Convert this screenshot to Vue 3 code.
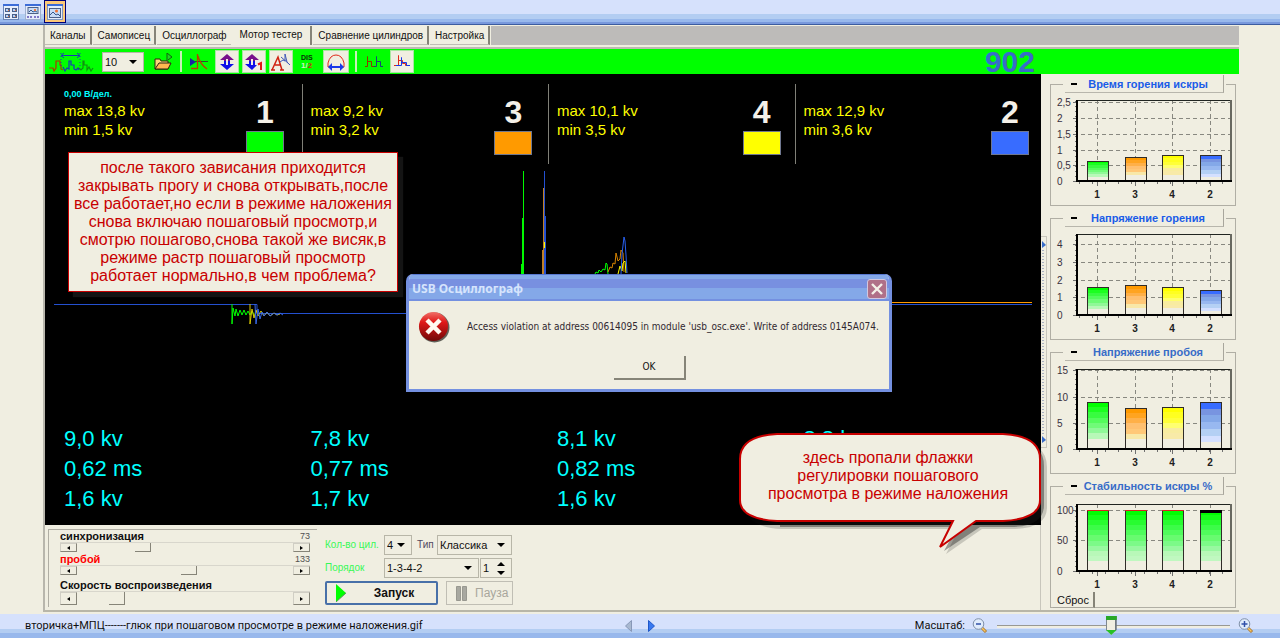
<script setup>
import { ref } from 'vue'

const tabs = ['Каналы', 'Самописец', 'Осциллограф', 'Мотор тестер', 'Сравнение цилиндров', 'Настройка']
const activeTab = ref(3)

const channels = [
  { id: 1, color: '#00ff00', max: '13,8', min: '1,5', read: ['9,0 kv', '0,62 ms', '1,6 kv'] },
  { id: 3, color: '#ff9a00', max: '9,2', min: '3,2', read: ['7,8 kv', '0,77 ms', '1,7 kv'] },
  { id: 4, color: '#ffff00', max: '10,1', min: '3,5', read: ['8,1 kv', '0,82 ms', '1,6 kv'] },
  { id: 2, color: '#386cff', max: '12,9', min: '3,6', read: ['8,8 kv'] }
]

const bands = {
  green: ['#00ff00', '#1cff20', '#38fc40', '#54fc5c', '#70fb78', '#90f898', '#b8f8b8', '#f0eee1', '#f0eee1'],
  orange: ['#ff9a00', '#ffa420', '#ffb048', '#ffc070', '#ffc878', '#f8e8a8', '#f0eee1', '#f0eee1'],
  yellow: ['#ffff00', '#ffff20', '#ffff38', '#ffff70', '#f8eca0', '#f8eaa8', '#f0eee1', '#f0eee1'],
  blue: ['#386cff', '#7894e0', '#84a8e8', '#98b8f0', '#b4d0f4', '#d4e0ff', '#f0eee1'],
  stable: ['#00ff00', '#14ff18', '#28fc30', '#3cfc48', '#50fc5c', '#68fb70', '#7cfa88', '#98f8a0', '#b8f8b8', '#c0f8c0', '#f0eee1', '#f0eee1']
}

const order = ['green', 'orange', 'yellow', 'blue']
const order4 = ['stable', 'stable', 'stable', 'stable']

const charts = [
  { title: 'Время горения искры', tone: '#1a5ce8', top: 7, base: 88, ticks: [['2,5', 9], ['2', 25], ['1,5', 41], ['1', 57], ['0,5', 72], ['0', 88]], bars: [68, 64, 62, 62], kinds: order },
  { title: 'Напряжение горения', tone: '#1a5ce8', top: 7, base: 88, ticks: [['4', 17], ['3', 35], ['2', 53], ['1', 70], ['0', 88]], bars: [60, 58, 60, 63], kinds: order },
  { title: 'Напряжение пробоя', tone: '#386cc8', top: 8, base: 88, ticks: [['15', 9], ['10', 36], ['5', 62], ['0', 88]], bars: [41, 47, 46, 41], kinds: order },
  { title: 'Стабильность искры %', tone: '#386cc8', top: 9, base: 76, ticks: [['100', 15], ['50', 45], ['0', 76]], bars: [15, 15, 15, 15], kinds: order4, cap: ['#d82020', '#d82020', '#d82020', '#000000'], reset: true }
]
const centers = [45, 83, 120, 158]

function slices(chart, i) {
  const list = bands[chart.kinds[i]]
  const h = (chart.base - chart.bars[i]) / list.length
  return list.map((fill, k) => ({ fill, y: chart.bars[i] + k * h, h: h + 0.2 }))
}

const sliders = [
  { id: 'sync', label: 'синхронизация', value: 29, shown: '73' },
  { id: 'brk', label: 'пробой', value: 52, shown: '133', red: true },
  { id: 'speed', label: 'Скорость воспроизведения', value: 16, shown: '' }
]
const scale = ref(49)
</script>

<template>
  <div class="viewer">
    <header class="topbar">
      <button class="view" aria-label="Эскизы">
        <svg width="16" height="16" viewBox="0 0 16 16"><rect x=".5" y=".5" width="15" height="15" fill="#e8eefc" stroke="#6c86b8" /><path d="M0 1h16" stroke="#3c6cd8" stroke-width="2" /><path d="M2 4h5v4H2zM9 4h5v4H9zM2 10h5v4H2zM9 10h5v4H9z" fill="#4c6088" /><path d="M3 5h2v2H3zM10 5h2v2h-2zM3 11h2v2H3zM10 11h2v2h-2z" fill="#b8d0f8" /><path d="M5 6h1v1H5zM12 6h1v1h-1zM5 12h1v1H5zM12 12h1v1h-1z" fill="#f08040" /></svg>
      </button>
      <button class="view" aria-label="Лента">
        <svg width="16" height="16" viewBox="0 0 16 16"><rect x=".5" y=".5" width="15" height="15" fill="#e4ecfc" stroke="#a0b0d0" /><path d="M0 1h16" stroke="#3c6cd8" stroke-width="2" /><rect x="3" y="3.500" width="10" height="6" fill="#c8dcf8" stroke="#4c6088" /><path d="M4 8l2-2 2 2 2-1 2 1" stroke="#38588c" fill="none" /><path d="M9 5h2v2H9z" fill="#f08040" /><path d="M2 12h2v2H2zM5 12h2v2H5zM9 12h2v2H9zM12 12h2v2h-2z" fill="#8078c8" /></svg>
      </button>
      <button class="view on" aria-label="Один рисунок">
        <svg width="16" height="16" viewBox="0 0 16 16"><rect x=".5" y=".5" width="15" height="15" fill="#e4ecfc" stroke="#8098c0" /><path d="M0 1h16" stroke="#3c6cd8" stroke-width="2" /><rect x="2.500" y="4.500" width="11" height="9" fill="#c8dcf8" stroke="#4c6088" /><path d="M3 11l3-3 3 3 2-1 2 2" stroke="#38588c" fill="none" /><circle cx="9.500" cy="7" r="1.500" fill="#f07030" /></svg>
      </button>
    </header>

    <main class="app">
      <nav class="tabs">
        <button v-for="(t, i) in tabs" :key="t" class="tab" :class="{ active: i === activeTab, before: i === activeTab - 1 }" @click="activeTab = i">{{ t }}</button>
        <span class="tabfill"></span>
      </nav>

      <div class="toolbar">
        <svg class="wave" width="46" height="20" viewBox="0 0 46 20" fill="none"><path d="M0 16h4l1 3 2-3V9h4v4h1v4l2 1" stroke="#b83000" stroke-width="1.200" /><path d="M14 15l2 4 2-3 2 1V9h2v4h3v4l2 1 2-2 1 2" stroke="#1838b8" stroke-width="1.200" /><path d="M30 16l2 2 2-2V9h1v4h3v5l2-3 2 4 2-3" stroke="#109010" stroke-width="1.200" /><path d="M13 3.500h17M15 1l-3 2.500 3 2.500M28 1l3 2.500-3 2.500" stroke="#1838b8" /><path d="M12 1v13M31 1v13" stroke="#1838b8" stroke-dasharray="1 2" /></svg>
        <label class="drop scalebox"><select aria-label="Развертка"><option>10</option></select><svg width="8" height="4" viewBox="0 0 8 4"><path d="M0 0h8L4 4z" /></svg></label>
        <svg class="open" width="20" height="18" viewBox="0 0 20 18"><path d="M1 16V6h5l1 2h7v8z" fill="#f8d878" stroke="#302010" /><path d="M1 16l4-6h12l-3 6z" fill="#ffb850" stroke="#302010" /><path d="M13 8V0l5 4-4 3" fill="#20d820" stroke="#106010" /></svg>
        <i class="sep"></i>
        <svg class="trig" width="18" height="18" viewBox="0 0 18 18" fill="none"><path d="M0 5l6 4-6 4z" fill="#1828a0" /><path d="M5 8.500h13" stroke="#305030" /><path d="M7.500 1v15M8 3q2 8 9 13M1 15.500h7" stroke="#b84000" stroke-width="1.300" /></svg>
        <button class="tool" aria-label="Масштаб по вертикали"><svg width="16" height="18" viewBox="0 0 16 18"><path d="M8 1l7 6h-4v4H5V7H1z" fill="#78108c" /><path d="M8 17l7-6h-4V8H5v3H1z" fill="#1010e8" /><path d="M7 6h2v6H7z" fill="#f0eee1" /></svg></button>
        <button class="tool" aria-label="Масштаб одного"><svg width="18" height="18" viewBox="0 0 18 18"><path d="M7 1l7 6h-4v4H4V7H0z" fill="#78108c" /><path d="M7 17l5-5h-2V8H4v3H0z" fill="#1010e8" /><path d="M6 6h2v6H6z" fill="#f0eee1" /><path d="M13 11.500l3-1.500v7" stroke="#e01818" stroke-width="2" fill="none" /></svg></button>
        <button class="tool" aria-label="Автоматически"><svg width="20" height="18" viewBox="0 0 20 18" fill="none"><path d="M1 17L7 4l4 13M4 12h5M0 17h4M9 17h4" stroke="#d02010" stroke-width="1.500" /><path d="M9 9l3-2 2 1V1l2 8 3 3M10 4l8 7" stroke="#4058b8" /></svg></button>
        <span class="dis"><b>DIS</b><span><em>1/</em><u>2</u></span></span>
        <button class="tool wide" aria-label="Полный цикл"><svg width="20" height="18" viewBox="0 0 20 18" fill="none"><path d="M4 14H2V10q2-8 8-8t8 8v4h-2" stroke="#e02818" /><path d="M3 14h14" stroke="#1838e8" stroke-width="2" /><path d="M6 10v8l-4-4zM14 10v8l4-4z" fill="#1838e8" /></svg></button>
        <i class="sep"></i>
        <svg class="pulse" width="18" height="14" viewBox="0 0 18 14" fill="none"><path d="M0 11.500h2.500V1.500v5h4v5H9" stroke="#903800" /><path d="M9 11.500h2.500V1.500v5h4v5H18" stroke="#184878" /></svg>
        <button class="tool" aria-label="Наложение"><svg width="16" height="14" viewBox="0 0 16 14" fill="none"><path d="M0 10.500h4.500V.500v5h4v3h3v2H16" stroke="#e02818" /><path d="M2 10.500h5.500V2.500v5h5v3H16" stroke="#1838e8" /></svg></button>
        <output class="counter">902</output>
      </div>

      <div class="work">
        <div class="left">
          <section class="scope">
            <svg class="traces" viewBox="0 0 996 451" preserveAspectRatio="none" fill="none">
              <path d="M9 230.500h203v9h151M847 230.500h140" stroke="#2450d0" />
              <path d="M847 228.500h140" stroke="#ff9a00" />
              <path d="M187 230v20l1-16 2 8 1-7 2 7 2-6 2 5 2-5 2 5 2-4 2 4 2-4 2 4" stroke="#00ff00" />
              <path d="M205 230v20l2-15 2 9 2-8 2 6 3-5 3 5 3-4 3 4 4-3 3 2 3-1" stroke="#d8c800" />
              <path d="M210 230l1 20 2-15 2 10 2-7 2 4 3-4 3 4 4-3 3 2 3-2 3 2" stroke="#3868e8" />
              <path d="M478.500 97v103M477.500 144v56M476.500 190v10" stroke="#00f800" />
              <path d="M498.500 114v86M497.500 176v24" stroke="#c08028" />
              <path d="M499.500 97v103M500.500 142v58" stroke="#2450d0" /><path d="M499.500 168v6" stroke="#ffff00" />
              <path d="M550 200l1-2 2 1 1-3 2 2 2-3 2 1 1-7 1 1 1 10" stroke="#00ff00" />
              <path d="M563 198l2-5 2 1 1-5 2 1 1-11 2 8 2-2 1-9 2 3 1 19" stroke="#d88400" />
              <path d="M573 200l2-8 2 5 1-8 2-2 1 12" stroke="#ffff00" />
              <path d="M576 200l1-20 2-17 1 4 1 14 1 18" stroke="#2860f0" />
            </svg>
            <div class="head">
              <div class="limits">
                <div v-for="(c, i) in channels" :key="c.id" class="limit" :class="{ line: i }">
                  <small>{{ i ? '' : '0,00 В/дел.' }}</small>
                  <p>max {{ c.max }} kv</p>
                  <p>min {{ c.min }} kv</p>
                </div>
              </div>
              <div class="keys">
                <div v-for="c in channels" :key="c.id" class="key">
                  <strong>{{ c.id }}</strong>
                  <svg width="38" height="24"><rect x=".5" y=".5" width="37" height="23" :fill="c.color" stroke="#707890" /></svg>
                </div>
              </div>
            </div>
            <div class="reads">
              <div v-for="c in channels" :key="c.id"><p v-for="(r, k) in c.read" :key="k">{{ r }}</p></div>
            </div>

            <aside class="note">после такого зависания приходится закрывать прогу и снова открывать,после все работает,но если в режиме наложения снова включаю пошаговый просмотр,и смотрю пошагово,снова такой же висяк,в режиме растр пошаговый просмотр работает нормально,в чем проблема?</aside>

            <div class="dialog" role="dialog" aria-labelledby="dlg-title">
              <div class="caption">
                <h2 id="dlg-title">USB Осциллограф</h2>
                <button aria-label="Закрыть"><svg width="12" height="12" viewBox="0 0 12 12"><path d="M1 1l10 10M11 1L1 11" stroke="#f4f0e8" stroke-width="2.400" /></svg></button>
              </div>
              <div class="message">
                <svg width="32" height="32" viewBox="0 0 32 32">
                  <defs><linearGradient id="red" x1="0" y1="0" x2="0" y2="1"><stop offset="0" stop-color="#f07068" /><stop offset=".35" stop-color="#e01818" /><stop offset="1" stop-color="#700808" /></linearGradient></defs>
                  <circle cx="16.500" cy="16.500" r="15" fill="#606058" /><circle cx="15.500" cy="15.500" r="14.500" fill="url(#red)" />
                  <path d="M9 9l13 13M22 9L9 22" stroke="#fff8f0" stroke-width="4.500" />
                </svg>
                <p>Access violation at address 00614095 in module 'usb_osc.exe'. Write of address 0145A074.</p>
              </div>
              <button class="ok">OK</button>
            </div>

            <aside class="bubble">
              <svg width="312" height="126" viewBox="0 0 312 126">
                <path d="M44 8H274Q309 10 309 35V75Q309 97 274 97H244L208 122 221 97H44Q8 95 8 75" fill="#101010" opacity=".18" />
                <path d="M42 7H272Q306 9 306 34V73Q306 95 272 95H242L206 119 219 95H42" fill="#181818" opacity=".4" />
                <path d="M39 2H265Q302 4 302 27V68Q302 87 265 89H238L202 115 215 89H39Q2 87 2 68V27Q2 4 39 2Z" fill="#f0eee1" stroke="#c80000" stroke-width="2" />
              </svg>
              <p>здесь пропали флажки<br>регулировки пошагового<br>просмотра в режиме наложения</p>
            </aside>
          </section>

          <section class="controls">
            <div class="scrolls">
              <div v-for="s in sliders" :key="s.id" class="scroll" :class="s.id">
                <div class="cap"><label :for="s.id" :class="{ red: s.red }">{{ s.label }}</label><span>{{ s.shown }}</span></div>
                <div class="bar">
                  <button aria-label="Меньше"><svg width="3" height="4" viewBox="0 0 3 4"><path d="M3 0v4L0 2z" /></svg></button>
                  <input :id="s.id" v-model="s.value" type="range" min="0" max="100">
                  <button aria-label="Больше"><svg width="3" height="4" viewBox="0 0 3 4"><path d="M0 0v4l3-2z" /></svg></button>
                </div>
              </div>
            </div>
            <div class="setup">
              <div class="row">
                <label class="lime" for="cyl">Кол-во цил.</label>
                <span class="drop cyl"><select id="cyl"><option>4</option></select><svg width="8" height="4" viewBox="0 0 8 4"><path d="M0 0h8L4 4z" /></svg></span>
                <label class="type" for="kind">Тип</label>
                <span class="drop kind"><select id="kind"><option>Классика</option></select><svg width="8" height="4" viewBox="0 0 8 4"><path d="M0 0h8L4 4z" /></svg></span>
              </div>
              <div class="row">
                <label class="lime" for="order">Порядок</label>
                <span class="drop order"><select id="order"><option>1-3-4-2</option></select><svg width="8" height="4" viewBox="0 0 8 4"><path d="M0 0h8L4 4z" /></svg></span>
                <span class="drop spin"><input type="text" value="1" aria-label="Номер"><svg width="8" height="13" viewBox="0 0 8 13"><path d="M0 4h8L4 0zM0 9h8l-4 4z" /></svg></span>
              </div>
              <div class="row">
                <button class="start"><svg width="10" height="18" viewBox="0 0 10 18"><path d="M0 0v18l10-9z" fill="#00ff00" /><path d="M0 18l10-9" stroke="#609060" /></svg><span>Запуск</span></button>
                <button class="pause"><svg width="11" height="15" viewBox="0 0 11 15"><path d="M.5.500h4v14h-4zM6.500.500h4v14h-4z" fill="#a8a8a0" stroke="#989890" /></svg><span>Пауза</span></button>
              </div>
            </div>
          </section>
        </div>

        <div class="splitter"><div><svg width="4" height="7" viewBox="0 0 4 7"><path d="M0 0v7l4-3z" fill="#386cc8" /></svg><i></i><svg width="4" height="7" viewBox="0 0 4 7"><path d="M0 0v7l4-3z" fill="#386cc8" /></svg></div></div>

        <section class="charts">
          <fieldset v-for="c in charts" :key="c.title">
            <legend><button><i></i><span :style="{ color: c.tone }">{{ c.title }}</span></button></legend>
            <svg class="chart" width="183" :height="c.base + 19" :viewBox="`0 0 183 ${c.base + 19}`">
              <g stroke="#888880" stroke-dasharray="4 3" shape-rendering="crispEdges">
                <path v-for="t in c.ticks.slice(0, -1)" :key="t[0]" :d="`M22 ${t[1]}.5H179`" />
                <path v-for="x in centers" :key="x" :d="`M${x}.5 ${c.top}V${c.base}`" />
              </g>
              <g stroke="#707070" shape-rendering="crispEdges">
                <path v-for="n in 12" :key="n" :d="`M${14 + n * 13}.5 ${c.base}v3`" />
                <path v-for="x in centers" :key="x" :d="`M${x}.5 ${c.base}v5`" />
                <path v-for="n in Math.floor((c.base - c.top) / 5)" :key="n + 20" :d="`M23 ${c.base - n * 5}.5h2`" />
                <path v-for="t in c.ticks" :key="t[0]" :d="`M21 ${t[1]}.5h4`" />
              </g>
              <g v-for="(x, i) in centers" :key="x" shape-rendering="crispEdges">
                <rect v-for="(s, k) in slices(c, i)" :key="k" :x="x - 10" :y="s.y" width="21" :height="s.h" :fill="s.fill" />
                <path :d="`M${x - 10}.5 ${c.base}V${c.bars[i]}.5H${x + 11}.5V${c.base}`" fill="none" stroke="#302c28" />
                <rect v-if="c.cap" :x="x - 10" :y="c.bars[i]" width="22" :height="i === 3 ? 3 : 1" :fill="c.cap[i]" />
              </g>
              <g shape-rendering="crispEdges"><path :d="`M25 ${c.top}.5H180`" stroke="#202420" /><path :d="`M179 ${c.top}V${c.base}`" stroke="#686860" stroke-width="2" /><path :d="`M25 ${c.top}V${c.base}H180`" fill="none" stroke="#000" stroke-width="2" /></g>
              <text v-for="t in c.ticks" :key="t[0]" x="5" :y="t[1] + 4" class="tick">{{ t[0] }}</text>
              <text v-for="(x, i) in centers" :key="x" :x="x" :y="c.base + 17" class="num">{{ channels[i].id }}</text>
            </svg>
            <button v-if="c.reset" class="reset">Сброс</button>
          </fieldset>
        </section>
      </div>
    </main>

    <footer class="status">
      <span class="file">вторичка+МПЦ-------глюк при пошаговом просмотре в режиме наложения.gif</span>
      <button class="prev" aria-label="Назад"><svg width="7" height="12" viewBox="0 0 7 12"><path d="M6.500.500v11L.500 6z" fill="#a8b8d0" stroke="#8898b8" /></svg></button>
      <button class="next" aria-label="Вперед"><svg width="7" height="12" viewBox="0 0 7 12"><path d="M.500.500v11L6.500 6z" fill="#3878f0" stroke="#2058c8" /></svg></button>
      <label class="zoomlabel" for="scale">Масштаб:</label>
      <button aria-label="Уменьшить"><svg width="16" height="16" viewBox="0 0 16 16"><path d="M10 10l4 4" stroke="#a87028" stroke-width="3" /><path d="M10 10l3.500 3.500" stroke="#f8c860" stroke-width="1.500" /><circle cx="6.500" cy="6" r="5.300" fill="#e0ecfc" stroke="#8090a8" /><path d="M4 6h5" stroke="#3050a8" stroke-width="1.500" /></svg></button>
      <input id="scale" v-model="scale" type="range" min="0" max="100">
      <button aria-label="Увеличить"><svg width="16" height="16" viewBox="0 0 16 16"><path d="M10 10l4 4" stroke="#a87028" stroke-width="3" /><path d="M10 10l3.500 3.500" stroke="#f8c860" stroke-width="1.500" /><circle cx="6.500" cy="6" r="5.300" fill="#e0ecfc" stroke="#8090a8" /><path d="M3.500 6h6M6.500 3v6" stroke="#3050a8" stroke-width="1.500" /></svg></button>
    </footer>
  </div>
</template>

<style>
body { margin: 0; background: #f0eee1; }
</style>

<style scoped>
* { box-sizing: border-box; }
p, h2 { margin: 0; }
button, input, select { margin: 0; padding: 0; border: 0; background: none; font: inherit; color: inherit; appearance: none; border-radius: 0; }
svg { display: block; flex: none; }
.viewer { display: flex; flex-direction: column; min-height: 100vh; background: #f0eee1; font: 11px/14px "Liberation Sans", sans-serif; color: #101010; }

.topbar { height: 25px; display: flex; align-items: flex-start; background: linear-gradient(#d6e1fc 14px, #b3cdf2 14px 19px, #98b8ec 19px 22px, #7898dc 22px 24px, #3c5ca0 24px); }
.view { width: 22px; height: 23px; display: grid; place-items: center; }
.view.on { border: 1px solid #000078; background: #fcc878; }

.app { flex: 1; display: flex; flex-direction: column; margin: 0 41px 2px 43px; border-left: 2px solid #b8b6ac; border-bottom: 2px solid #b8b6a8; }
.tabs { display: flex; height: 24px; padding-top: 1px; border-bottom: 2px solid #bcbab2; font-size: 10px; }
.tab { height: 19px; margin-right: 1px; padding: 1px 4px 0 5px; border-right: 2px solid #868478; border-bottom: 1px solid #c0beb4; white-space: nowrap; }
.tab.before { border-right: 0; }
.tab.active { padding: 0 8px 2px 8px; border-bottom: 0; }
.tabfill { flex: 1; height: 19px; background: #bdbbb9; }

.toolbar { height: 25px; display: flex; align-items: center; background: #00ff00; }
.wave { margin-left: 4px; }
.drop { position: relative; display: flex; align-items: center; height: 20px; border: 1px solid #b8b6a8; background: #f0eee1; }
.drop select, .drop input { width: 100%; height: 100%; padding-left: 2px; }
.drop svg { position: absolute; right: 6px; pointer-events: none; }
.scalebox { width: 42px; margin-left: 7px; }
.open { margin-left: 10px; }
.sep { width: 2px; height: 21px; margin: 0 6px; background: #c8f0b8; }
.sep + svg { margin-left: 2px; }
.trig { margin-right: 7px; }
.tool { width: 24px; height: 23px; margin-right: 3px; display: grid; place-items: center; background: #f0eee1; border: 1px solid #a8e8a0; }
.dis { display: grid; margin: 0 8px 0 5px; width: 14px; font-size: 7px; line-height: 8px; color: #083008; }
.dis em { color: #d0f0c0; font-style: normal; } .dis u { color: #c03010; text-decoration: none; }
.dis span { font-size: 8px; font-weight: bold; }
.tool.wide { margin-right: 0; width: 26px; }
.pulse { margin-right: 7px; }
.counter { margin: 0 204px 0 auto; font: bold 30px/25px "Liberation Sans", sans-serif; color: #386cc8; }

.work { flex: 1; display: flex; }
.left { flex: 1; display: flex; flex-direction: column; }
.scope { position: relative; flex: 1; display: flex; flex-direction: column; justify-content: space-between; min-height: 451px; background: #000; }
.traces { position: absolute; inset: 0; width: 100%; height: 100%; }
.head { display: grid; padding: 10px 0 0 10px; }
.limits, .keys { grid-area: 1 / 1; }
.limits, .reads { display: grid; grid-template-columns: repeat(4, 1fr); }
.limit { height: 80px; padding: 2px 0 0 9px; font-size: 15px; line-height: 19px; color: #ffff00; }
.limit.line { padding-left: 8px; border-left: 1px solid #808078; }
.limit small { display: block; height: 15px; font: bold 9px/16px "Liberation Sans", sans-serif; color: #00ffff; }
.keys { display: flex; justify-content: space-between; padding: 9px 12px 0 191px; }
.key { width: 38px; text-align: center; color: #f4f0e8; }
.key strong { display: block; font-size: 32px; line-height: 38px; }
.reads { padding: 0 0 11px 10px; font-size: 22px; line-height: 30px; color: #00ffff; }
.reads > div { padding-left: 9px; }

.note { position: absolute; left: 23px; top: 78px; width: 330px; padding: 6px 0; border: 1px solid #c80000; background: #f0eee1; box-shadow: 5px 5px 1px #141414; font-size: 16px; line-height: 18px; color: #c80000; text-align: center; }
.dialog { position: absolute; left: 361px; top: 200px; width: 486px; height: 118px; border: 3px solid #7490e0; border-top: 0; border-radius: 7px 7px 0 0; background: #f0eee1; overflow: hidden; }
.caption { display: flex; justify-content: space-between; align-items: center; height: 27px; padding: 2px 2px 0 3px; background: linear-gradient(#5878d0 1px, #84a8e8 1px 5px, #7890e0 5px 14px, #84a8e8 14px 25px, #7490e0 25px); }
.caption h2 { font: bold 12px/16px "Noto Sans", sans-serif; color: #d6e4fc; }
.caption button { width: 20px; height: 20px; display: grid; place-items: center; border: 1px solid #d0c8e0; border-radius: 3px; background: #b07088; }
.message { display: flex; gap: 17px; padding: 10px 0 0 9px; align-items: flex-start; }
.message p { padding-top: 9px; font-family: "DejaVu Sans Condensed", "DejaVu Sans", sans-serif; font-size: 10px; white-space: nowrap; color: #302830; }
.ok { display: block; width: 72px; height: 24px; margin: 13px auto 0 205px; border-right: 2px solid #868478; border-bottom: 2px solid #868478; font-family: "DejaVu Sans Condensed", "DejaVu Sans", sans-serif; font-size: 10px; }
.bubble { position: absolute; z-index: 2; left: 693px; top: 358px; color: #c80000; font-size: 16px; line-height: 18px; text-align: center; }
.bubble p { position: absolute; inset: 17px 12px auto 0; white-space: nowrap; }

.controls { height: 85px; padding: 4px 0 0 3px; display: flex; gap: 8px; border-right: 1px solid #c8c6bc; }
.scrolls { width: 269px; height: 78px; padding: 0 7px 0 11px; border-left: 1px solid #b0aea4; border-top: 1px solid #b0aea4; }
.scroll { margin-bottom: 1px; }
.cap { display: flex; justify-content: space-between; height: 12px; line-height: 12px; }
.cap label { font-weight: bold; } .cap span { font-size: 9px; color: #505050; }
.red { color: #ff0000; }
.bar { display: flex; height: 10px; border-top: 1px solid #d8d6cc; }
.speed { padding-top: 3px; } .speed .bar { height: 14px; }
.bar button { width: 17px; display: grid; place-items: center; border: 1px solid #d0cec4; border-right: 1px solid #868478; border-bottom: 1px solid #868478; }
.bar input { flex: 1; min-width: 0; height: 100%; }
.bar input::-webkit-slider-thumb { appearance: none; box-sizing: border-box; width: 16px; height: 9px; background: #f0eee1; border-right: 1px solid #868478; border-bottom: 1px solid #868478; }
.speed .bar input::-webkit-slider-thumb { height: 13px; }
.setup { display: grid; gap: 3px; align-content: start; padding-top: 6px; }
.row { display: flex; align-items: center; }
.lime { width: 59px; font-size: 10px; color: #38f858; white-space: nowrap; }
.cyl { width: 28px; } .type { width: 17px; margin: 0 3px 0 5px; font-size: 10px; color: #504860; } .kind { width: 75px; }
.order { width: 95px; margin-right: 1px; } .spin { width: 32px; }
.start, .pause { display: flex; align-items: center; height: 24px; font-weight: bold; font-size: 12px; }
.start { width: 113px; padding-left: 9px; border: 2px solid #4870a8; border-radius: 2px; }
.start span { flex: 1; text-align: center; padding-left: 6px; }
.pause { width: 67px; margin-left: 8px; padding-left: 9px; gap: 8px; border: 1px solid #c0beb4; font-weight: normal; color: #a8a69c; }

.splitter { width: 6px; display: flex; align-items: flex-start; padding-top: 162px; }
.splitter div { width: 6px; height: 212px; display: flex; flex-direction: column; padding: 4px 0 4px 1px; border: 1px solid #c8c6bc; border-left: 0; }
.splitter i { flex: 1; width: 2px; margin: 2px 0; background: repeating-linear-gradient(#a8b0c0 0 1px, #f0eee1 1px 3px); }
.charts { width: 192px; padding: 1px 3px 0 3px; display: flex; flex-direction: column; gap: 3px; }
fieldset { margin: 0; padding: 0 0 0 1px; min-width: 0; height: 131px; border: 1px solid #b0aea4; display: block; }
legend { margin-left: 11px; padding: 0 2px; }
legend button { display: flex; align-items: center; width: 159px; height: 18px; padding-right: 4px; border-right: 1px solid #a8a69c; border-bottom: 1px solid #b8b6ac; font-weight: bold; }
legend i { width: 6px; height: 2px; margin-left: 6px; background: #000; }
legend span { flex: 1; text-align: center; white-space: nowrap; }
.tick { font-size: 10px; fill: #383040; } .num { font-size: 10px; font-weight: bold; text-anchor: middle; fill: #202020; }
.reset { margin: 2px 0 0 1px; padding: 0 4px; height: 16px; border-right: 2px solid #868478; border-bottom: 1px solid #a8a69c; line-height: 14px; }

.status { height: 25px; display: flex; align-items: center; padding: 0 26px 2px 25px; background: linear-gradient(#d6e1fc 15px, #b3cdf2 15px 19px, #98b8ec 19px 24px, #3c5ca0 24px); font-family: Roboto, sans-serif; }
.file { width: 600px; white-space: nowrap; }
.next { margin-left: 16px; }
.zoomlabel { margin: 0 7px 0 auto; }
.status input { width: 233px; height: 20px; margin: 0 8px 0 9px; background: linear-gradient(transparent 9px, #989894 9px 10px, #f0eee1 10px 12px, transparent 12px); }
.status input::-webkit-slider-thumb { appearance: none; width: 11px; height: 19px; clip-path: polygon(0 0, 100% 0, 100% 72%, 50% 100%, 0 72%); background: linear-gradient(#28a828 4px, transparent 4px 14px, #28c028 14px), linear-gradient(90deg, #808890 1px, #f0eee1 1px 9px, #707880 9px); }
</style>
